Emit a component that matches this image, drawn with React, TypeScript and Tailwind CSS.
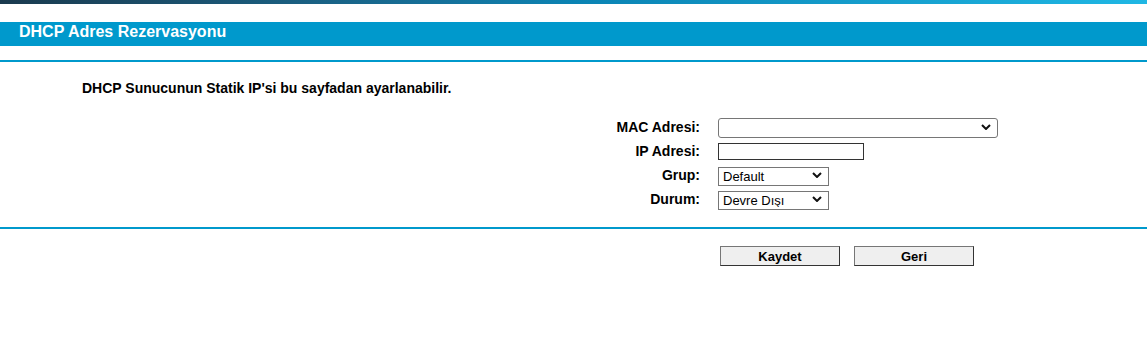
import { useState } from "react";

const font = { fontFamily: '"Liberation Sans", Arial, sans-serif' };

const Chevron = () => (
  <svg
    width="10"
    height="6"
    viewBox="0 0 10 6"
    className="pointer-events-none absolute right-[7px] top-1/2 -translate-y-1/2"
  >
    <path d="M1 1 L5 5 L9 1" fill="none" stroke="#111" strokeWidth="2" />
  </svg>
);

type SelectProps = {
  value: string;
  options: string[];
  onChange: (v: string) => void;
  className: string;
};

const Select = ({ value, options, onChange, className }: SelectProps) => (
  <div className={`relative ${className}`}>
    <select
      value={value}
      onChange={(e) => onChange(e.target.value)}
      className="h-full w-full appearance-none border border-[#767676] bg-white pl-[4px] text-[13px] font-normal leading-none text-black outline-none [border-radius:inherit]"
    >
      {options.map((o) => (
        <option key={o} value={o}>
          {o}
        </option>
      ))}
    </select>
    <Chevron />
  </div>
);

const App = () => {
  const [mac, setMac] = useState("");
  const [ip, setIp] = useState("");
  const [group, setGroup] = useState("Default");
  const [status, setStatus] = useState("Devre Dışı");

  return (
    <div className="min-h-[352px] w-full bg-white text-black" style={font}>
      <div className="h-[4px] w-full bg-linear-to-r from-[#1a3a4e] via-[#0a83b3] to-[#1fb7e4]" />

      <div className="mt-[18px] h-[24px] bg-[#0099cc] pl-[19px]">
        <h1 className="text-[16px] font-bold leading-[20px] text-white">
          DHCP Adres Rezervasyonu
        </h1>
      </div>

      <div className="mt-[14px] h-[2px] bg-[#0099cc]" />

      <p className="mt-[18px] pl-[82px] text-[14px] font-bold leading-[16px]">
        DHCP Sunucunun Statik IP'si bu sayfadan ayarlanabilir.
      </p>

      <div className="mt-[19px] grid auto-rows-[24px] grid-cols-[700px_auto] items-center gap-x-[18px] text-[14px] font-bold">
        <label className="text-right">MAC Adresi:</label>
        <Select
          value={mac}
          options={[""]}
          onChange={setMac}
          className="h-[20px] w-[280px] rounded-[3px]"
        />

        <label className="text-right">IP Adresi:</label>
        <input
          value={ip}
          onChange={(e) => setIp(e.target.value)}
          className="h-[17px] w-[146px] border border-[#333] bg-white px-[2px] text-[13px] font-normal outline-none"
        />

        <label className="text-right">Grup:</label>
        <Select
          value={group}
          options={["Default"]}
          onChange={setGroup}
          className="h-[19px] w-[111px]"
        />

        <label className="text-right">Durum:</label>
        <Select
          value={status}
          options={["Devre Dışı", "Etkin"]}
          onChange={setStatus}
          className="h-[19px] w-[111px]"
        />
      </div>

      <div className="mt-[16px] h-[2px] bg-[#0099cc]" />

      <div className="mt-[17px] flex gap-[14px] pl-[720px]">
        <button className="h-[20px] w-[120px] border border-[#767676] border-b-[#333] border-r-[#333] bg-[#efefef] text-[13px] font-bold leading-none">
          Kaydet
        </button>
        <button className="h-[20px] w-[120px] border border-[#767676] border-b-[#333] border-r-[#333] bg-[#efefef] text-[13px] font-bold leading-none">
          Geri
        </button>
      </div>
    </div>
  );
};

export default App;
